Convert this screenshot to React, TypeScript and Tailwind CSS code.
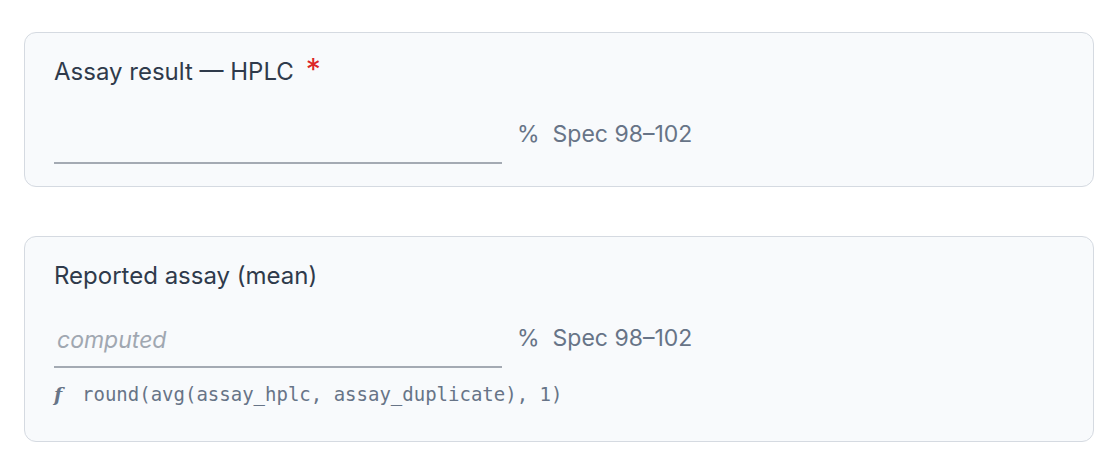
interface FieldCardProps {
  label: string;
  required?: boolean;
  placeholder?: string;
  unit: string;
  spec: string;
  formula?: string;
}

const FieldCard = ({ label, required, placeholder, unit, spec, formula }: FieldCardProps) => {
  return (
    <section className="rounded-xl border border-[#d5dae1] bg-[#f8fafc] px-[29px] pt-[25px] pb-[22px]">
      <label className="flex items-center text-[24px] leading-[28px] text-[#2f3a4b]">
        <span>{label}</span>
        {required && (
          <span className="ml-[12px] -mt-[6px] text-[30px] leading-[28px] text-[#dc2626]">*</span>
        )}
      </label>
      <div className="mt-[28px] flex items-center">
        <input
          type="text"
          readOnly={!!formula}
          placeholder={placeholder}
          className="w-[448px] border-b-2 border-[#a4aab3] bg-transparent pt-[8px] pb-[12px] pl-[3px] text-[23px] leading-[28px] text-[#2f3a4b] outline-none placeholder:italic placeholder:text-[#a0a7b1]"
        />
        <span className="-mt-[10px] ml-[15px] text-[23px] text-[#677487]">{unit}</span>
        <span className="-mt-[10px] ml-[13px] text-[23px] text-[#677487]">{spec}</span>
      </div>
      {formula && (
        <div className="mt-[10px] mb-[9px] flex h-[32px] items-center text-[#677487]">
          <span className="w-[28px] font-['DejaVu_Serif',serif] text-[19px] font-bold italic">f</span>
          <span className="font-['DejaVu_Sans_Mono',monospace] text-[19px] leading-[32px]">{formula}</span>
        </div>
      )}
    </section>
  );
};

export default function App() {
  return (
    <div className="flex min-h-screen flex-col gap-[49px] bg-white px-[24px] pt-[32px] font-['Inter',sans-serif]">
      <FieldCard label="Assay result — HPLC" required unit="%" spec="Spec 98–102" />
      <FieldCard
        label="Reported assay (mean)"
        placeholder="computed"
        unit="%"
        spec="Spec 98–102"
        formula="round(avg(assay_hplc, assay_duplicate), 1)"
      />
    </div>
  );
}
